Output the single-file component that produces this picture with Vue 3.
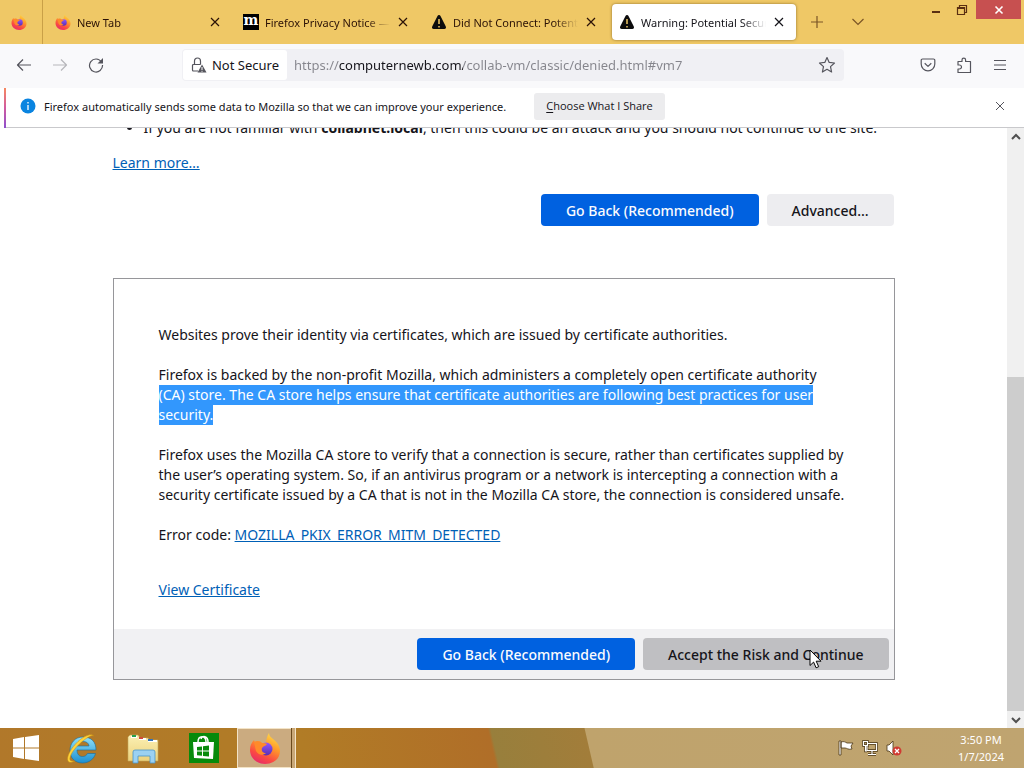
<script setup>
const tabs = [
  { title: 'New Tab', icon: 'fox', active: false },
  { title: 'Firefox Privacy Notice —', icon: 'moz', active: false },
  { title: 'Did Not Connect: Potent', icon: 'warn', active: false },
  { title: 'Warning: Potential Secur', icon: 'warn', active: true }
]
const address = 'https://computernewb.com/collab-vm/classic/denied.html#vm7'
</script>

<template>
  <div class="screen">
    <svg class="defs" width="0" height="0" aria-hidden="true">
      <defs>
        <linearGradient id="flame" x1="0.8" y1="0" x2="0.3" y2="1">
          <stop offset="0" stop-color="#ffe14a" />
          <stop offset="0.4" stop-color="#ff9a2a" />
          <stop offset="0.75" stop-color="#fb4a42" />
          <stop offset="1" stop-color="#e72a6a" />
        </linearGradient>
        <linearGradient id="globe" x1="0" y1="0" x2="0" y2="1">
          <stop offset="0" stop-color="#9059ff" />
          <stop offset="1" stop-color="#5b2fb0" />
        </linearGradient>
        <linearGradient id="ie" x1="0" y1="0" x2="0" y2="1">
          <stop offset="0" stop-color="#8fe0fa" />
          <stop offset="1" stop-color="#1c8fd0" />
        </linearGradient>
        <linearGradient id="folder" x1="0" y1="0" x2="0" y2="1">
          <stop offset="0" stop-color="#fbf0b4" />
          <stop offset="1" stop-color="#ecd27c" />
        </linearGradient>
        <symbol id="fox" viewBox="0 0 32 32">
          <path fill="url(#flame)" d="M20 1c0 3 2 4 4 6 4 3 7 7 7 12 0 8-7 13-15 13S1 26 1 18c0-5 2-8 4-10l1 3c2-1 4-2 6-1l2 3 3-1c0-4 1-8 3-11z" />
          <circle cx="17" cy="17" r="6.500" fill="url(#globe)" />
          <path fill="#ff8a2a" d="M5 10c3-2 6-1 8 1 2 0 4 0 5 1-1 2-4 2-5 4-1 3 1 5 4 5-3 3-8 2-10-2-1-3-1-6-2-9z" />
        </symbol>
        <symbol id="warn" viewBox="0 0 16 16">
          <path fill="#0c0c0d" d="M8 1c.7 0 1.2.4 1.5 1l5.3 10.5c.6 1.200-.1 2.500-1.500 2.500H2.700c-1.400 0-2.100-1.300-1.500-2.500L6.500 2C6.800 1.400 7.300 1 8 1z" />
          <path class="mark" d="M8 5v5M8 12v1.400" />
        </symbol>
      </defs>
    </svg>

    <header class="titlebar">
      <button class="pinned" aria-label="Firefox View"><svg width="16" height="16"><use href="#fox" /></svg></button>
      <div class="tabs">
        <div v-for="tab in tabs" :key="tab.title" class="tab" :class="{ active: tab.active }">
          <svg v-if="tab.icon !== 'moz'" width="16" height="16"><use :href="'#' + tab.icon" /></svg>
          <span v-else class="moz">m</span>
          <span class="title">{{ tab.title }}</span>
          <button class="close" :aria-label="'Close ' + tab.title">
            <svg width="10" height="10" viewBox="0 0 10 10"><path d="M1 1l8 8M9 1l-8 8" /></svg>
          </button>
        </div>
      </div>
      <button class="strip" aria-label="New tab"><svg width="14" height="14" viewBox="0 0 14 14"><path d="M7 1v12M1 7h12" /></svg></button>
      <button class="strip" aria-label="List all tabs"><svg width="14" height="14" viewBox="0 0 14 14"><path d="M1.500 4L7 9.500 12.500 4" /></svg></button>
      <div class="window-controls">
        <button aria-label="Minimize"><svg width="12" height="12" viewBox="0 0 12 12"><path class="min" d="M2 8h8" /></svg></button>
        <button aria-label="Restore"><svg width="12" height="12" viewBox="0 0 12 12"><path d="M1.500 3.500h7v7h-7zM1.500 4.500h7M3.500 3V1.500h7v7H9" /></svg></button>
        <button class="quit" aria-label="Close window"><svg width="10" height="10" viewBox="0 0 10 10"><path d="M1.500 1.500l7 7M8.500 1.500l-7 7" /></svg></button>
      </div>
    </header>

    <nav class="toolbar">
      <button aria-label="Back"><svg width="16" height="16" viewBox="0 0 16 16"><path d="M15 8H1.500M7 2.500L1.500 8 7 13.500" /></svg></button>
      <button class="dim" aria-label="Forward"><svg width="16" height="16" viewBox="0 0 16 16"><path d="M1 8h13.500M9 2.500L14.500 8 9 13.500" /></svg></button>
      <button aria-label="Reload"><svg width="16" height="16" viewBox="0 0 16 16"><path d="M13.500 5A6.500 6.500 0 1 0 14.500 8" /><path class="solid" d="M15 1v5.500H9.500z" /></svg></button>
      <div class="urlbar">
        <button class="identity">
          <svg width="16" height="16" viewBox="0 0 16 16"><path d="M7 14H2.500a1 1 0 0 1-1-1V8.500a1 1 0 0 1 1-1h7M3.500 7.500V4a3 3 0 0 1 6 0v3.500" /><path class="solid" d="M11 7.500l4.500 8h-9z" /><path class="white" d="M11 10v3M11 13.800v1" /></svg>
          Not Secure
        </button>
        <input class="address" type="text" :value="address" aria-label="Address" />
        <button class="star" aria-label="Bookmark this page"><svg width="18" height="18" viewBox="0 0 18 18"><path d="M9 1.500l2.200 4.900 5.300.6-4 3.600 1.100 5.400L9 13.300 4.400 16l1.100-5.400-4-3.600 5.300-.6z" /></svg></button>
      </div>
      <div class="actions">
        <button aria-label="Save to Pocket"><svg width="16" height="16" viewBox="0 0 16 16"><path d="M2.500 2h11a1.300 1.300 0 0 1 1.300 1.300V7a6.800 6.800 0 0 1-13.600 0V3.300A1.300 1.300 0 0 1 2.500 2zM4.700 6.300L8 9.400l3.300-3.100" /></svg></button>
        <button aria-label="Extensions"><svg width="16" height="16" viewBox="0 0 16 16"><path d="M2 8V4.500h4V3a1.800 1.800 0 0 1 3.600 0v1.500h4.900v11H2V12h1.500a1.900 1.900 0 0 0 0-4z" /></svg></button>
        <button aria-label="Open application menu"><svg width="14" height="14" viewBox="0 0 14 14"><path d="M1 2.500h12M1 7h12M1 11.500h12" /></svg></button>
      </div>
    </nav>

    <aside class="notice">
      <svg width="16" height="16" viewBox="0 0 16 16"><circle cx="8" cy="8" r="7.500" fill="#0a84e0" /><path class="white" d="M8 7v5M8 4v1.500" /></svg>
      <p>Firefox automatically sends some data to Mozilla so that we can improve your experience.</p>
      <button class="choose"><span><u>C</u>hoose What I Share</span></button>
      <button class="dismiss" aria-label="Dismiss"><svg width="10" height="10" viewBox="0 0 10 10"><path d="M1 1l8 8M9 1l-8 8" /></svg></button>
    </aside>

    <div class="viewport">
      <main>
        <ul>
          <li>If you are not familiar with <b>collabnet.local</b>, then this could be an attack and you should not continue to the site.</li>
        </ul>
        <a href="#learn">Learn more…</a>
        <div class="buttons">
          <button class="primary">Go Back (Recommended)</button>
          <button>Advanced…</button>
        </div>
        <section class="panel">
          <div class="details">
            <p>Websites prove their identity via certificates, which are issued by certificate authorities.</p>
            <p>Firefox is backed by the non-profit Mozilla, which administers a completely open certificate authority<br /><mark>(CA) store. The CA store helps ensure that certificate authorities are following best practices for user<br />security.</mark></p>
            <p>Firefox uses the Mozilla CA store to verify that a connection is secure, rather than certificates supplied by the user’s operating system. So, if an antivirus program or a network is intercepting a connection with a security certificate issued by a CA that is not in the Mozilla CA store, the connection is considered unsafe.</p>
            <p>Error code: <a href="#code">MOZILLA_PKIX_ERROR_MITM_DETECTED</a></p>
            <p class="view"><a href="#certificate">View Certificate</a></p>
          </div>
          <div class="buttons foot">
            <button class="primary">Go Back (Recommended)</button>
            <button class="hovered">Accept the Risk and Continue
              <svg class="cursor" width="14" height="20" viewBox="0 0 14 20"><path d="M1 1v15.500l3.600-3.400 2.500 5.700 2.600-1.100-2.500-5.500H12z" /></svg>
            </button>
          </div>
        </section>
      </main>
      <div class="scrollbar">
        <button aria-label="Scroll up"><svg width="10" height="10" viewBox="0 0 10 10"><path d="M1 7l4-4 4 4" /></svg></button>
        <div class="track"><div class="thumb"></div></div>
        <button aria-label="Scroll down"><svg width="10" height="10" viewBox="0 0 10 10"><path d="M1 3l4 4 4-4" /></svg></button>
      </div>
    </div>

    <footer class="taskbar">
      <button aria-label="Start"><svg width="28" height="28" viewBox="0 0 28 28"><path fill="#fff" d="M1 5l11-2v10.500H1zM13 3l14-2v12.500H13zM1 14.500h11V25L1 23zM13 14.500h14V27l-14-2z" /></svg></button>
      <button aria-label="Internet Explorer"><svg width="32" height="32" viewBox="0 0 32 32"><path fill="url(#ie)" stroke="#176ca0" stroke-width="0.600" d="M30 18H11c0 4 2 6.500 5.500 6.500 2.500 0 4-1 5-3h8C28 27 23 31 16.500 31 9 31 4 26 4 18.500S9 5 17 5c8.500 0 13 5 13 13zM11 14h12c-.3-3-2.500-4.500-6-4.500S11.500 11 11 14z" /><path fill="#ffd43a" stroke="#c68b12" stroke-width="0.500" d="M28 4c-3-3-10 0-16 5.500C5 16 0 25 2 29c1 2 4 1.500 7 0-3 .5-4.500 0-5-1-1-4 4-11 10-16.500C19 7 26 2 28 4z" /></svg></button>
      <button aria-label="File Explorer"><svg width="32" height="32" viewBox="0 0 32 32"><path fill="url(#folder)" stroke="#c3a75a" stroke-width="0.600" d="M1 5l2-2h8l2 3h8l1 2h9v21H1z" /><path fill="#fff" d="M4 4h6v2H4zM12 6h7v2h-7zM21 8h9v2h-9z" /><path fill="#27a04c" d="M5 3h4v2H5z" /><path fill="#d24b3c" d="M12 5h4v2h-4z" /><path fill="#3573b8" d="M21 7h5v2h-5z" /><path fill="#9bd1f2" stroke="#4a94c8" stroke-width="0.800" d="M6 31V20q0-2 2-2h18q2 0 2 2v11h-5v-7H11v7z" /></svg></button>
      <button aria-label="Store"><svg width="30" height="30" viewBox="0 0 30 30"><path fill="#078a0b" d="M0 0h30v30H0z" /><path fill="#fff" d="M4 9l21 0-1 17-19-1z" /><path fill="none" stroke="#fff" stroke-width="1.500" d="M9 9c0-7 8-7 8 0M12 6c1-4 7-3 7 3" /><path fill="#078a0b" d="M8 14l5-.6v4.200H8zM14 13.300l6-.7v5h-6zM8 18.600h5v4.200l-5-.6zM14 18.600h6v5l-6-.7z" /></svg></button>
      <button class="running" aria-label="Firefox"><svg width="32" height="32"><use href="#fox" /></svg></button>
      <div class="tray">
        <svg width="16" height="16" viewBox="0 0 16 16"><path class="tray-shape" d="M1 1h2v14H1zM3 2c3-1 4 0 6 1h6l-2 3 1 3c-4 1-5-1-7-1H3z" /></svg>
        <svg width="16" height="16" viewBox="0 0 16 16"><path class="tray-dark" d="M6 3.500h8.500v7H5v-5M10 11v3M6 14.500h8M1.500 1.500h4v4h-4zM3.500 6v5H5" /><path class="tray-light" d="M6 3.500h8.500v7H5v-5M10 11v3M6 14.500h8M1.500 1.500h4v4h-4zM3.500 6v5H5" /></svg>
        <svg width="16" height="16" viewBox="0 0 16 16"><path class="tray-shape" d="M1 5h2l4-4v14l-4-4H1z" /><circle cx="11" cy="11" r="4.500" fill="#d03a32" /><path class="white" d="M9 9l4 4M13 9l-4 4" /></svg>
      </div>
      <time><span>3:50 PM</span><span>1/7/2024</span></time>
    </footer>
  </div>
</template>

<style>
body { margin: 0; }
</style>

<style scoped>
.screen { height: 100vh; display: flex; flex-direction: column; overflow: hidden; background: #fff; color: #15141a; font: 14px/20px "Noto Sans", "Open Sans", sans-serif; }
.defs { position: absolute; }
.screen * { box-sizing: border-box; }
button { font: inherit; color: inherit; border: 0; padding: 0; margin: 0; background: none; display: flex; align-items: center; justify-content: center; }
svg { flex: none; display: block; }
p { margin: 0; }
.mark { stroke: #f0c866; stroke-width: 1.500; }
.white { fill: none; stroke: #fff; stroke-width: 1.300; }

.titlebar { flex: none; height: 44px; display: flex; background: #efc866; font-size: 11px; }
.titlebar path { fill: none; stroke: #5a2f12; stroke-width: 1.200; }
.pinned { width: 43px; padding-right: 4px; border-right: 1px solid #c9a047; }
.tabs { display: flex; gap: 4px; padding: 4px 0 4px 5px; min-width: 0; }
.tab { flex: 0 1 184px; width: 184px; min-width: 0; display: flex; align-items: center; gap: 5px; padding: 0 9px 0 7px; border-radius: 4px; color: #2b1206; }
.tab.active { background: #fff; color: #15141a; box-shadow: 0 0 3px #8d6d2a; }
.title { flex: 1; min-width: 0; padding: 2px 0 0 1px; overflow: hidden; white-space: nowrap; mask-image: linear-gradient(to left, transparent, #000 24px); }
.close { width: 16px; height: 16px; }
.close path { stroke: currentColor; }
.moz { width: 16px; height: 16px; background: #000; color: #fff; font: bold 14px/13px "DejaVu Serif", serif; text-align: center; }
.strip { width: 41px; }
.strip path { stroke: #7a5526; }
.window-controls { margin-left: auto; height: 19px; display: flex; padding-right: 3px; }
.window-controls button { width: 26px; }
.window-controls .min { stroke-width: 2; }
.window-controls .quit { width: 45px; margin-left: 1px; background: #c75050; }
.window-controls .quit path { stroke: #fff; stroke-width: 1.600; }

.toolbar { flex: none; height: 44px; display: flex; align-items: center; padding: 0 6px 2px; background: #f9f9fb; }
.toolbar path { fill: none; stroke: #55555d; stroke-width: 1.200; stroke-linejoin: round; }
.toolbar path.solid { fill: #55555d; stroke: none; }
.toolbar path.white { stroke: #fff; stroke-width: 1; }
.toolbar > button { width: 36px; height: 32px; }
.dim { opacity: 0.4; }
.urlbar { flex: 1; height: 32px; display: flex; margin: 0 66px 0 68px; background: #f0f0f4; border-radius: 4px; padding: 1px; font-size: 13px; }
.identity { width: 104px; gap: 5px; background: #fff; border-radius: 3px; }
.address { flex: 1; min-width: 0; border: 0; outline: 0; padding: 0 0 0 7px; font: inherit; color: transparent; background: linear-gradient(to right, #85858c 52px, #15141a 52px, #15141a 176px, #85858c 176px); background-clip: text; -webkit-background-clip: text; }
.star { width: 33px; }
.actions { display: flex; }
.actions button { width: 36px; height: 32px; }

.notice { flex: none; height: 40px; display: flex; align-items: center; padding: 0 18px 4px 14px; margin-left: 4px; border-left: 2px solid; border-image: linear-gradient(#f98a5c, #d05aa0, #8a4fd0) 1; font-size: 11px; box-shadow: 0 -1px 0 #c9c9cc inset; }
.notice p { margin-left: 8px; padding-top: 2px; white-space: nowrap; }
.choose { margin-left: 28px; height: 27px; padding: 0 12px; background: #ececee; border-radius: 3px; font-family: "Open Sans", "Noto Sans", sans-serif; font-weight: 500; }
.choose u { text-underline-offset: 2px; }
.dismiss { margin-left: auto; width: 12px; height: 16px; }
.dismiss path { stroke: #55555c; fill: none; }

.viewport { flex: 1; min-height: 0; display: flex; overflow: hidden; }
main { flex: 1; min-width: 0; max-width: 782px; margin: -10px auto 0; }
ul { margin: 0 0 15px; padding-left: 31px; }
a { color: #0060b6; text-decoration: underline; }
.buttons { display: flex; justify-content: flex-end; gap: 8px; margin-top: 21px; padding-right: 1px; }
.buttons button { height: 32px; padding: 1px 25px 0; border-radius: 4px; background: #ededf0; font-weight: 500; white-space: nowrap; }
.buttons .primary { background: #0061e0; color: #fbfbfe; }
.panel { margin-top: 52px; border: 1px solid #96969a; }
.details { padding: 46px 45px 29px; }
.details p { margin-bottom: 20px; }
.details .view { margin: 35px 0 0; }
mark { background: #3297fd; color: #fff; padding-bottom: 1px; }
.foot { margin: 0; padding: 9px 5px; background: #f1f1f3; }
.buttons .hovered { position: relative; background: #bfbfc2; }
.cursor { position: absolute; left: 166px; top: 11px; }
.cursor path { fill: #fff; stroke: #000; stroke-width: 1; }

.scrollbar { flex: none; width: 17px; display: flex; flex-direction: column; background: #f0f0f0; }
.scrollbar button { height: 17px; }
.scrollbar path { fill: none; stroke: #505050; stroke-width: 2; }
.track { flex: 1; display: flex; flex-direction: column; justify-content: flex-end; }
.thumb { height: 59%; background: #cdcdcd; }

.taskbar { flex: none; height: 40px; display: flex; align-items: center; padding-right: 20px; color: #fff; background: linear-gradient(77deg, #b1782a 0, #b17c26 300px, #b06e28 484px, #987f3c 487px, #a27d3a 578px, #bfa36c 579px, #bfa470 100%); }
.taskbar > button { width: 61px; height: 40px; }
.taskbar > button:first-child { width: 51px; }
.taskbar > .running { width: 54px; margin-left: 3px; border: 1px solid #f3e3c6; border-right: 0; background: #cbab80; box-shadow: 1px 0 0 #6b4a1c, 4px 0 0 #c9a878, 5px 0 0 #f3e3c6; }
.tray { margin-left: auto; display: flex; gap: 8px; }
.tray-shape { fill: #fff; stroke: #4a3514; stroke-width: 0.800; }
.tray-dark { fill: none; stroke: #4a3514; stroke-width: 2.600; }
.tray-light { fill: none; stroke: #fff; stroke-width: 1.200; }
time { margin-left: 56px; display: flex; flex-direction: column; align-items: center; font-size: 11px; line-height: 17px; }
</style>
